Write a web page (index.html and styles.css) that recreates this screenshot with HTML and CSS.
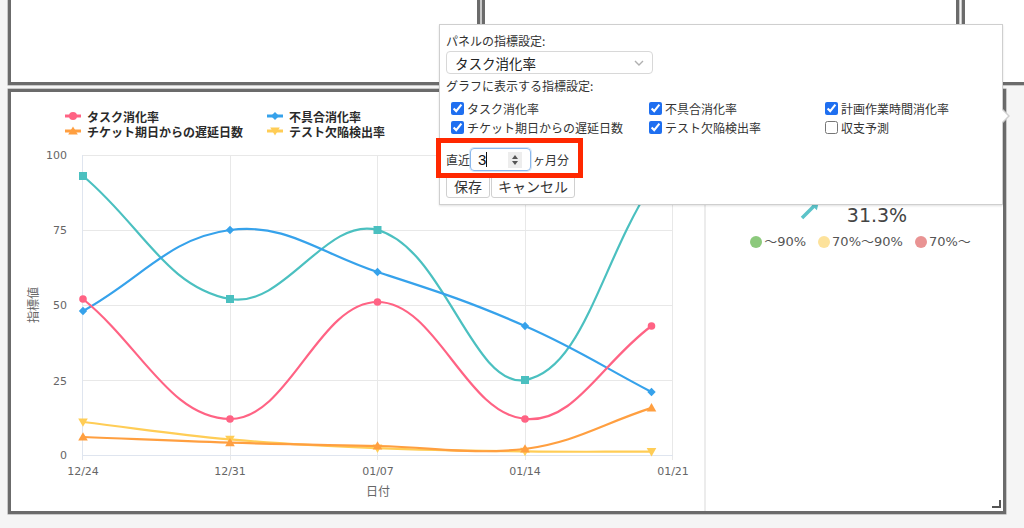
FILE: index.html
```html
<!DOCTYPE html>
<html lang="ja">
<head>
<meta charset="utf-8">
<title>ダッシュボード</title>
<link rel="stylesheet" href="styles.css">
</head>
<body>
<div class="dash">
  <div class="top-row">
    <div class="panel top p1"></div>
    <div class="panel top p2"></div>
    <div class="panel top p3"></div>
  </div>
  <div class="panel main">
    <div class="chart-sec">
      <svg class="chart" width="693" height="419" viewBox="11 92 693 419">
        <g class="legend">
          <line class="lg-line s-red" x1="65" y1="116" x2="81" y2="116"/>
          <circle class="mk s-red" cx="73" cy="116" r="4"/>
          <text class="lg-text" x="87" y="116">タスク消化率</text>
          <line class="lg-line s-blue" x1="267" y1="116" x2="283" y2="116"/>
          <polygon class="mk s-blue" points="275,112 279,116 275,120 271,116"/>
          <text class="lg-text" x="289" y="116">不具合消化率</text>
          <line class="lg-line s-orange" x1="65" y1="131" x2="81" y2="131"/>
          <polygon class="mk s-orange" points="73,126.5 77.8,134.5 68.2,134.5"/>
          <text class="lg-text" x="87" y="131">チケット期日からの遅延日数</text>
          <line class="lg-line s-yellow" x1="267" y1="131" x2="283" y2="131"/>
          <polygon class="mk s-yellow" points="275,135.5 279.8,127.5 270.2,127.5"/>
          <text class="lg-text" x="289" y="131">テスト欠陥検出率</text>
        </g>
        <g class="grid">
          <line x1="83" y1="155.5" x2="673" y2="155.5"/>
          <line x1="83" y1="230.5" x2="673" y2="230.5"/>
          <line x1="83" y1="305.5" x2="673" y2="305.5"/>
          <line x1="83" y1="380.5" x2="673" y2="380.5"/>
          <line x1="230.5" y1="155" x2="230.5" y2="460"/>
          <line x1="377.5" y1="155" x2="377.5" y2="460"/>
          <line x1="525.5" y1="155" x2="525.5" y2="460"/>
          <line x1="672.5" y1="155" x2="672.5" y2="460"/>
          <line class="axis" x1="83" y1="455.5" x2="673" y2="455.5"/>
          <line class="axis" x1="82.5" y1="155" x2="82.5" y2="460"/>
        </g>
        <g class="ticks-y">
          <text x="67" y="155">100</text>
          <text x="67" y="230">75</text>
          <text x="67" y="305">50</text>
          <text x="67" y="381">25</text>
          <text x="67" y="455">0</text>
        </g>
        <g class="ticks-x">
          <text x="83" y="471">12/24</text>
          <text x="230" y="471">12/31</text>
          <text x="378" y="471">01/07</text>
          <text x="525" y="471">01/14</text>
          <text x="673" y="471">01/21</text>
        </g>
        <text class="axis-title" x="378" y="490">日付</text>
        <text class="axis-title" x="32" y="305" transform="rotate(-90 32 305)">指標値</text>
        <g id="series"></g>
      </svg>
    </div>
    <div class="gauge-sec">
      <div class="g-value">
        <svg class="g-arrow" width="24" height="24" viewBox="0 0 24 24"><path d="M2.76 16.76 L14.06 5.46 L11.8 3.12 L21 1 L18.88 10.2 L16.54 7.94 L5.24 19.24 Z"/></svg>
        <span class="g-num">31.3%</span>
      </div>
      <div class="g-legend">
        <span class="gl-item"><i class="dot green"></i>〜90%</span>
        <span class="gl-item"><i class="dot yellow"></i>70%〜90%</span>
        <span class="gl-item"><i class="dot pink"></i>70%〜</span>
      </div>
    </div>
    <span class="resize"></span>
  </div>
</div>

<div class="popup">
  <div class="lbl">パネルの指標設定:</div>
  <div class="sel"><span>タスク消化率</span><svg class="chev" width="10" height="6" viewBox="0 0 10 6"><path d="M1 1l4 4 4-4"/></svg></div>
  <div class="lbl lbl2">グラフに表示する指標設定:</div>
  <div class="checks">
    <label class="ck"><input type="checkbox" checked>タスク消化率</label>
    <label class="ck"><input type="checkbox" checked>不具合消化率</label>
    <label class="ck"><input type="checkbox" checked>計画作業時間消化率</label>
    <label class="ck"><input type="checkbox" checked>チケット期日からの遅延日数</label>
    <label class="ck"><input type="checkbox" checked>テスト欠陥検出率</label>
    <label class="ck"><input type="checkbox">収支予測</label>
  </div>
  <div class="months">
    <span>直近</span>
    <span class="num"><span class="num-val">3</span><span class="caret"></span><span class="spin"><i class="up"></i><i class="down"></i></span></span>
    <span class="unit">ヶ月分</span>
  </div>
  <div class="btns">
    <button class="btn">保存</button><button class="btn">キャンセル</button>
  </div>
</div>
<div class="highlight"></div>
<script src="chart.js"></script>
</body>
</html>
```

FILE: styles.css
```css
html, body {
  margin: 0;
  padding: 0;
}
body {
  width: 1024px;
  height: 528px;
  overflow: hidden;
  background: #f5f5f5;
  font-family: "Noto Sans CJK JP", "Noto Sans", sans-serif;
  color: #333;
  position: relative;
}
.dash {
  padding-left: 8px;
}
.top-row {
  display: flex;
  width: 1016px;
  height: 85px;
}
.panel {
  background: #fff;
  border: 3px solid #6b6b6b;
  box-sizing: border-box;
  box-shadow: 0 0 0 0.5px #9c9c9c;
}
.top {
  border-top: 0;
  height: 85px;
  flex: none;
}
.p1 { width: 472px; }
.p2 { width: 477px; margin-left: 2px; }
.p3 { flex: 1; margin-left: 3px; border-right: 0; }

.main {
  margin-top: 4px;
  width: 998px;
  height: 425px;
  display: flex;
  position: relative;
}
.chart-sec {
  width: 693px;
  flex: none;
  border-right: 2px solid #ececec;
}
.chart {
  display: block;
}
.lg-line {
  stroke-width: 3;
}
.lg-text {
  font: bold 12px "Noto Sans CJK JP", sans-serif;
  fill: #2a2a2a;
  dominant-baseline: central;
}
.grid line {
  stroke: #e8e8e8;
  stroke-width: 1;
}
.grid line.axis {
  stroke: #dfe5ef;
}
.ticks-y text,
.ticks-x text {
  font: 11px "DejaVu Sans", sans-serif;
  fill: #666;
  dominant-baseline: central;
}
.ticks-y text { text-anchor: end; }
.ticks-x text { text-anchor: middle; }
.axis-title {
  font: 12px "Noto Sans CJK JP", sans-serif;
  fill: #666;
  text-anchor: middle;
  dominant-baseline: central;
}
.s-red { stroke: #ff6384; fill: #ff6384; }
.s-blue { stroke: #36a2eb; fill: #36a2eb; }
.s-teal { stroke: #4bc0c0; fill: #4bc0c0; }
.s-orange { stroke: #ff9f40; fill: #ff9f40; }
.s-yellow { stroke: #ffcd56; fill: #ffcd56; }
.line {
  fill: none;
  stroke-width: 2.2;
}
.mk {
  stroke: none;
}

.gauge-sec {
  flex: 1;
  padding-top: 111px;
  display: flex;
  flex-direction: column;
}
.g-value {
  height: 24px;
  display: flex;
  align-items: center;
  justify-content: center;
  gap: 25px;
  padding-right: 4px;
}
.g-arrow {
  margin-bottom: 6px;
  fill: #5cc3c9;
}
.g-num {
  font: 19px "DejaVu Sans", sans-serif;
  color: #444;
  line-height: 24px;
}
.g-legend {
  margin-top: 7px;
  height: 16px;
  display: flex;
  justify-content: center;
  gap: 12px;
  padding-left: 12px;
  font: 13px "DejaVu Sans", "Noto Sans CJK JP", sans-serif;
  color: #555;
  line-height: 16px;
}
.gl-item {
  display: flex;
  align-items: center;
  gap: 2px;
}
.dot {
  width: 12px;
  height: 12px;
  border-radius: 50%;
  display: inline-block;
}
.dot.green { background: #8cc97c; }
.dot.yellow { background: #fde29b; }
.dot.pink { background: #e99393; }

.resize {
  position: absolute;
  right: 2px;
  bottom: 3px;
  width: 7px;
  height: 6px;
  border-right: 2px solid #555;
  border-bottom: 2px solid #555;
}

/* popup */
.popup {
  position: absolute;
  left: 439px;
  top: 24px;
  width: 564px;
  height: 181px;
  box-sizing: border-box;
  background: #fff;
  border: 1px solid #cfcfcf;
  box-shadow: 0 1px 2px rgba(0, 0, 0, 0.12);
  padding: 8px 7px 0 6px;
  font-size: 12px;
  color: #333;
  z-index: 5;
}
.popup::before,
.popup::after {
  content: "";
  position: absolute;
  top: 84px;
  width: 0;
  height: 0;
  border-top: 7px solid transparent;
  border-bottom: 7px solid transparent;
}
.popup::before {
  right: -8px;
  border-left: 7px solid #cfcfcf;
}
.popup::after {
  right: -6px;
  border-left: 6px solid #fff;
  border-top-width: 6px;
  border-bottom-width: 6px;
  top: 85px;
}
.lbl {
  line-height: 16px;
  height: 16px;
}
.lbl2 {
  margin-top: 4px;
}
.sel {
  margin-top: 2px;
  width: 207px;
  height: 23px;
  box-sizing: border-box;
  border: 1px solid #d8d8d8;
  border-radius: 4px;
  display: flex;
  align-items: center;
  justify-content: space-between;
  padding: 0 8px 0 8px;
  font-size: 13.5px;
  color: #222;
}
.chev {
  fill: none;
  stroke: #b0b0b0;
  stroke-width: 1.4;
}
.checks {
  margin-top: 5px;
  display: grid;
  grid-template-columns: 198px 176px 1fr;
  grid-auto-rows: 19px;
}
.ck {
  display: flex;
  align-items: center;
  font-size: 12px;
  color: #333;
}
.ck input {
  width: 13px;
  height: 13px;
  margin: 0 3px 0 5px;
  accent-color: #1f6ff0;
}
.months {
  margin-top: 11px;
  height: 23px;
  display: flex;
  align-items: center;
}
.num {
  width: 61px;
  height: 23px;
  box-sizing: border-box;
  border: 1px solid #8bb8ec;
  border-radius: 4px;
  box-shadow: 0 0 0 1px rgba(140, 185, 236, 0.35);
  display: flex;
  align-items: center;
  padding-left: 7px;
  font: 15px "Liberation Sans", sans-serif;
  color: #111;
}
.caret {
  width: 1px;
  height: 15px;
  background: #111;
  margin-left: 0;
}
.spin {
  margin-left: auto;
  margin-right: 8px;
  width: 14px;
  height: 16px;
  background: #ededed;
  display: flex;
  flex-direction: column;
  align-items: center;
  justify-content: center;
  gap: 2px;
}
.spin i {
  width: 0;
  height: 0;
  border-left: 3.5px solid transparent;
  border-right: 3.5px solid transparent;
}
.spin .up { border-bottom: 4px solid #555; }
.spin .down { border-top: 4px solid #555; }
.unit {
  margin-left: 2px;
}
.btns {
  margin-top: 4px;
  display: flex;
  gap: 1px;
}
.btn {
  height: 23px;
  box-sizing: border-box;
  border: 1px solid #d0d0d0;
  border-radius: 3px;
  background: #fff;
  font: 14px "Noto Sans CJK JP", sans-serif;
  color: #333;
  padding: 0 7px;
  line-height: 21px;
}
.btn + .btn {
  padding: 0 6px;
}
.highlight {
  position: absolute;
  left: 436px;
  top: 138px;
  width: 147px;
  height: 40px;
  box-sizing: border-box;
  border: 5px solid #ff2800;
  z-index: 6;
}
```

FILE: chart.js
```js
(function () {
  var NS = 'http://www.w3.org/2000/svg';
  var X = [83, 230, 377.5, 525, 651.5];
  var series = [
    { k: 's-yellow', v: [11, 5.2, 2.3, 1.2, 1.1], m: 'down' },
    { k: 's-orange', v: [6, 4.1, 3, 2, 15.7], m: 'up' },
    { k: 's-teal', v: [93, 52, 75, 25, 90], m: 'square' },
    { k: 's-blue', v: [48, 75, 61, 43, 21], m: 'diamond' },
    { k: 's-red', v: [52, 12, 51, 12, 43], m: 'circle' }
  ];
  var g = document.getElementById('series');
  function y(v) { return 455 - 3 * v; }
  function cap(p) {
    return [Math.min(673, Math.max(83, p[0])), Math.min(455, Math.max(155, p[1]))];
  }
  function el(name, attrs) {
    var e = document.createElementNS(NS, name);
    for (var a in attrs) e.setAttribute(a, attrs[a]);
    return e;
  }
  function marker(t, p, k) {
    var x = p[0], yy = p[1], pts;
    if (t === 'circle') return el('circle', { cx: x, cy: yy, r: 3.8, 'class': 'mk ' + k });
    if (t === 'square') return el('rect', { x: x - 4, y: yy - 4, width: 8, height: 8, 'class': 'mk ' + k });
    if (t === 'diamond') pts = [[x, yy - 4.2], [x + 4.2, yy], [x, yy + 4.2], [x - 4.2, yy]];
    else if (t === 'up') pts = [[x, yy - 4.8], [x + 4.8, yy + 3.6], [x - 4.8, yy + 3.6]];
    else pts = [[x, yy + 4.8], [x + 4.8, yy - 3.6], [x - 4.8, yy - 3.6]];
    return el('polygon', { points: pts.map(function (q) { return q.join(','); }).join(' '), 'class': 'mk ' + k });
  }
  series.forEach(function (s) {
    var pts = s.v.map(function (v, i) { return [X[i], y(v)]; });
    var cps = pts.map(function (p, i) {
      var a = pts[i - 1] || p, b = pts[i + 1] || p;
      var d01 = Math.hypot(p[0] - a[0], p[1] - a[1]);
      var d12 = Math.hypot(b[0] - p[0], b[1] - p[1]);
      var sum = d01 + d12;
      var s01 = sum ? d01 / sum : 0, s12 = sum ? d12 / sum : 0;
      var fa = 0.4 * s01, fb = 0.4 * s12;
      return {
        p: cap([p[0] - fa * (b[0] - a[0]), p[1] - fa * (b[1] - a[1])]),
        n: cap([p[0] + fb * (b[0] - a[0]), p[1] + fb * (b[1] - a[1])])
      };
    });
    var d = 'M' + pts[0].join(' ');
    for (var i = 1; i < pts.length; i++) {
      d += ' C' + cps[i - 1].n.join(' ') + ' ' + cps[i].p.join(' ') + ' ' + pts[i].join(' ');
    }
    g.appendChild(el('path', { d: d, 'class': 'line ' + s.k }));
    pts.forEach(function (p) { g.appendChild(marker(s.m, p, s.k)); });
  });
})();
```
